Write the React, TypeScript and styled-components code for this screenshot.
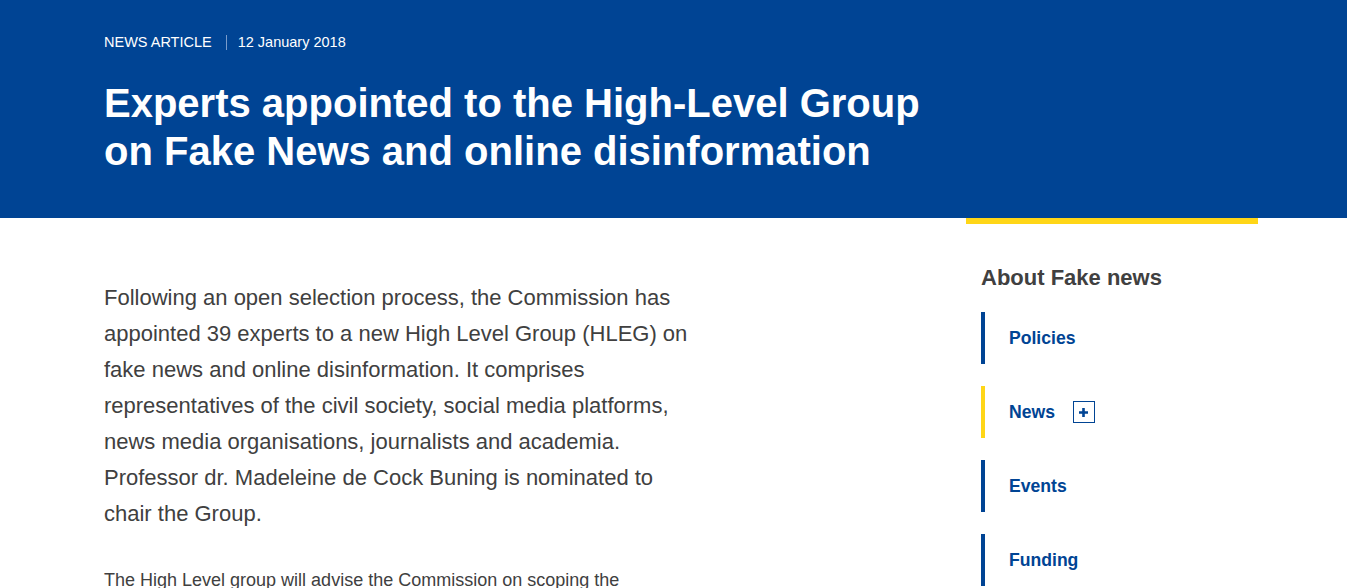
import styled, { createGlobalStyle } from 'styled-components';

const GlobalStyle = createGlobalStyle`
  html, body {
    margin: 0;
    padding: 0;
    background: #fff;
    font-family: "Liberation Sans", Arial, sans-serif;
    color: #404040;
  }
`;

const Banner = styled.header`
  background-color: #004494;
  color: #fff;
  padding: 32px 0 43px 104px;
`;

const Meta = styled.div`
  display: flex;
  align-items: center;
  font-size: 14.5px;
  line-height: 20px;
  margin-bottom: 27px;
`;

const MetaItem = styled.span<{ $divided?: boolean }>`
  ${(p) =>
    p.$divided &&
    `
    border-left: 1px solid #7a9ccb;
    margin-left: 14px;
    padding-left: 11px;
    line-height: 15px;
  `}
`;

const Title = styled.h1`
  margin: 0;
  font-size: 40px;
  line-height: 48px;
  font-weight: 700;
  max-width: 840px;
`;

const Body = styled.div`
  display: flex;
  padding-left: 104px;
`;

const Article = styled.main`
  width: 592px;
  padding-top: 62px;
`;

const Lead = styled.p`
  margin: 0 0 35px;
  font-size: 22px;
  line-height: 36px;
`;

const Para = styled.p`
  margin: 0;
  font-size: 18px;
  line-height: 27px;
`;

const Sidebar = styled.aside`
  margin-left: 270px;
  width: 292px;
  border-top: 6px solid #ffd617;
`;

const SideHeading = styled.h2`
  margin: 40px 0 20px 15px;
  font-size: 22px;
  line-height: 28px;
  font-weight: 700;
  color: #404040;
`;

const NavList = styled.ul`
  list-style: none;
  margin: 0 0 0 15px;
  padding: 0;
  display: flex;
  flex-direction: column;
  gap: 22px;
`;

const NavItem = styled.li<{ $active?: boolean }>`
  display: flex;
  align-items: center;
  height: 52px;
  border-left: 4px solid ${(p) => (p.$active ? '#ffd617' : '#004494')};
  padding-left: 24px;
  font-size: 17.6px;
  font-weight: 700;
  color: #004494;
`;

const Toggle = styled.span`
  display: inline-flex;
  align-items: center;
  justify-content: center;
  width: 20px;
  height: 20px;
  margin-left: 18px;
  border: 1px solid #004494;
`;

const nav = [
  { label: 'Policies' },
  { label: 'News', active: true, expandable: true },
  { label: 'Events' },
  { label: 'Funding' },
];

const App = () => {
  return (
    <>
      <GlobalStyle />
      <Banner>
        <Meta>
          <MetaItem>NEWS ARTICLE</MetaItem>
          <MetaItem $divided>12 January 2018</MetaItem>
        </Meta>
        <Title>
          Experts appointed to the High-Level Group on Fake News and online disinformation
        </Title>
      </Banner>
      <Body>
        <Article>
          <Lead>
            Following an open selection process, the Commission has appointed 39 experts to a
            new High Level Group (HLEG) on fake news and online disinformation. It comprises
            representatives of the civil society, social media platforms, news media
            organisations, journalists and academia. Professor dr. Madeleine de Cock Buning is
            nominated to chair the Group.
          </Lead>
          <Para>
            The High Level group will advise the Commission on scoping the phenomenon of fake
            news, defining the roles and responsibilities of relevant stakeholders.
          </Para>
        </Article>
        <Sidebar>
          <SideHeading>About Fake news</SideHeading>
          <NavList>
            {nav.map((item) => (
              <NavItem key={item.label} $active={item.active}>
                {item.label}
                {item.expandable && (
                  <Toggle>
                    <svg width="11" height="11" viewBox="0 0 11 11">
                      <path d="M5.5 1v9M1 5.5h9" stroke="#004494" strokeWidth="2.6" />
                    </svg>
                  </Toggle>
                )}
              </NavItem>
            ))}
          </NavList>
        </Sidebar>
      </Body>
    </>
  );
};

export default App;
